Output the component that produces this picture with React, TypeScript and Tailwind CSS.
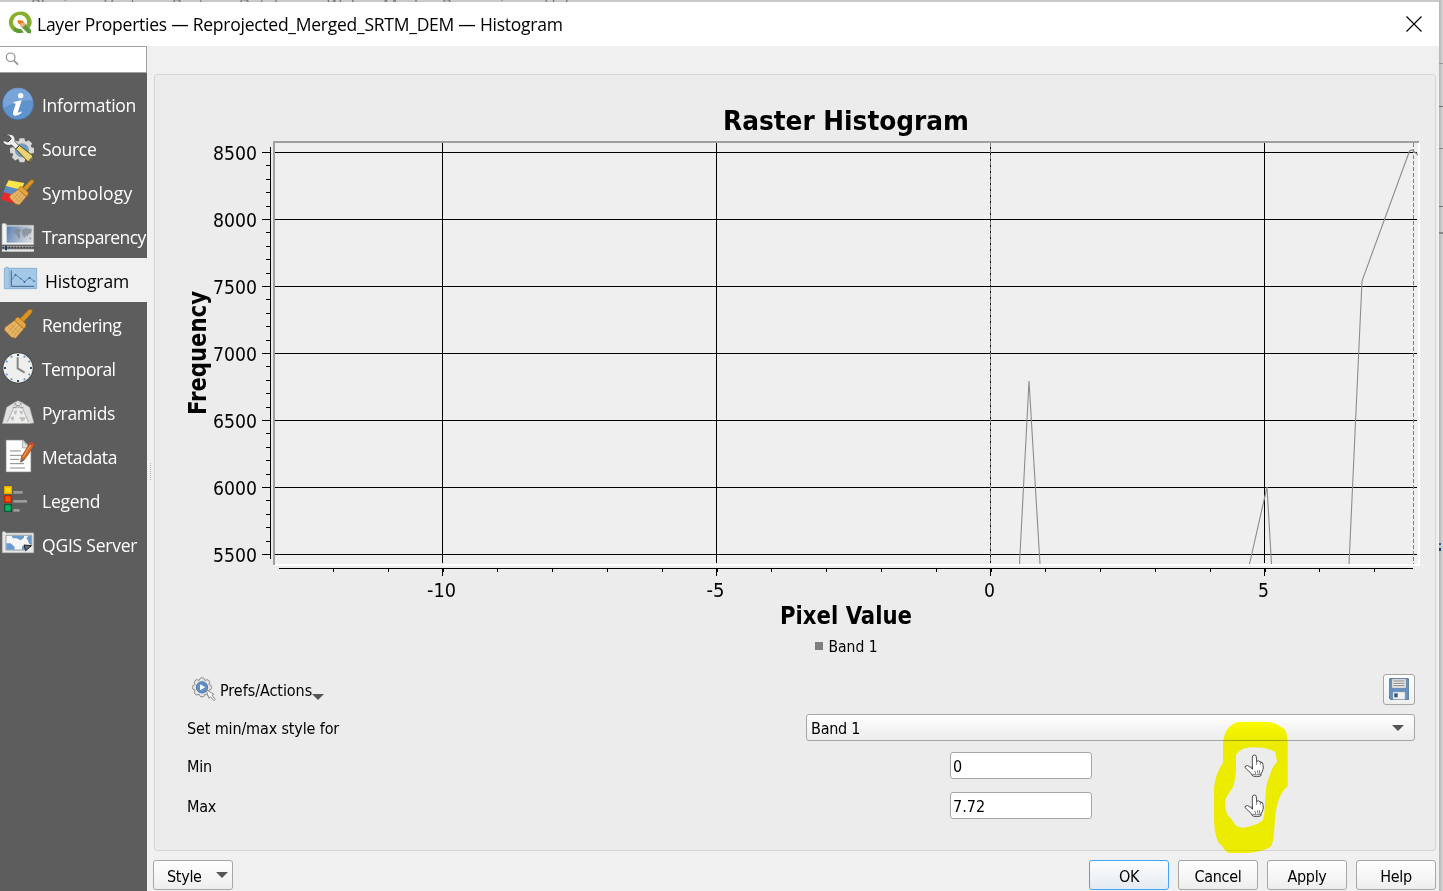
import type { ReactNode } from "react";

const SEGOE = "font-['Open_Sans','Noto_Sans',sans-serif]";
const TAHOMA = "font-['DejaVu_Sans_Condensed','DejaVu_Sans','Noto_Sans',sans-serif]";

/* Every side icon is drawn on a 120 x 132 grid, shown at a third of that size. */
function SideIcon({ children }: { children: ReactNode }) {
  return (
    <svg className="h-11 w-10 shrink-0" viewBox="0 0 120 132">
      {children}
    </svg>
  );
}

function Brush({ dx = 0, dy = 0 }: { dx?: number; dy?: number }) {
  return (
    <g transform={`translate(${dx} ${dy})`}>
      <path d="M56 54 L85 24 Q90 20 95 23 Q99 27 95 33 L68 63Z" fill="#db9527" stroke="#9a6512" strokeWidth="2" />
      <path d="M48 47 L56 46 L78 66 L77 76 L70 80 L44 56Z" fill="#e7a541" stroke="#94601a" strokeWidth="2" />
      <path d="M44 55 L71 81 L47 109 L34 106 L13 84 L15 76Z" fill="#e8b566" stroke="#94601a" strokeWidth="2" />
      <path d="M50 62 L24 91 M57 68 L32 99 M64 75 L41 104 M32 66 L58 92 M24 74 L49 99" stroke="#b98538" strokeWidth="1.5" fill="none" />
    </g>
  );
}

function InformationIcon() {
  return (
    <SideIcon>
      <circle cx="54" cy="66" r="47" fill="#5f93ce" stroke="#3f73b0" strokeWidth="2" />
      <path d="M10 66 A44 44 0 0 1 98 57 Q70 48 10 78Z" fill="#85ade0" opacity=".65" />
      <circle cx="62" cy="41" r="8" fill="#fff" />
      <path d="M41 60 Q55 57 65 55 L54 89 Q53 95 64 88 L65 92 Q54 102 44 101 Q36 99 40 88 L47 66 Q46 63 40 64Z" fill="#fff" />
    </SideIcon>
  );
}

function SourceIcon() {
  const teeth = [0, 45, 90, 135, 180, 225, 270, 315];
  return (
    <SideIcon>
      <g fill="#d6d8d6">
        {teeth.map((a) => (
          <path key={a} d="M55 50 L59 37 H73 L77 50Z" transform={`rotate(${a} 66 73)`} />
        ))}
        <circle cx="66" cy="73" r="29" />
      </g>
      <circle cx="66" cy="73" r="20" fill="#6b9bd0" stroke="#8c8f8c" strokeWidth="2" />
      <path d="M12 29 Q25 20 39 27 Q48 35 45 47 L57 59 L47 69 L35 57 Q17 62 9 49 L10 43 L24 48 L34 38 L27 29Z" fill="#eceeec" stroke="#404442" strokeWidth="2.5" />
      <path d="M58 58 L98 89 L99 101 L92 108 L83 106 L48 70Z" fill="#f0d979" stroke="#54490f" strokeWidth="3" />
      <path d="M62 67 L93 94 M55 72 L87 100" stroke="#d6bc58" strokeWidth="2" />
      <path d="M86 103 L97 92 L99 101 L92 108Z" fill="#6d6b61" />
    </SideIcon>
  );
}

function SymbologyIcon() {
  return (
    <SideIcon>
      <path d="M26 31 L73 39 L60 68 L17 48Z" fill="#fbe34b" />
      <path d="M17 48 L58 58 L45 78 L10 68Z" fill="#5c8cc8" />
      <path d="M10 66 L50 78 L48 101 L5 90Z" fill="#ea2a28" />
      <g transform="translate(17 10) scale(.87)">
        <Brush />
      </g>
    </SideIcon>
  );
}

function TransparencyIcon() {
  return (
    <SideIcon>
      <defs>
        <linearGradient id="fade" x1="0" x2="1" y1=".2" y2=".5">
          <stop offset="0" stopColor="#5f82b4" />
          <stop offset=".6" stopColor="#aab9cc" />
          <stop offset="1" stopColor="#d5d9dc" />
        </linearGradient>
      </defs>
      <path d="M6 30 Q12 25 19 30 V34 H101 V92 H6Z" fill="#f1f2f1" stroke="#a9abaa" strokeWidth="2" />
      <path d="M20 37 H98 V86 H20Z" fill="url(#fade)" />
      <path d="M42 47 L54 43 L64 48 L58 56 L61 66 L57 76 L51 64 L44 56Z M66 48 L78 42 L96 46 L93 58 L86 60 L82 68 L78 62 L73 72 L67 60Z M87 70 L95 72 L91 78Z" fill="#7f8893" opacity=".75" />
      <path d="M6 96 H102 V113 H6Z" fill="#e9e9e8" />
      <path d="M6 97 H102 V106 H6Z" fill="#777876" />
      <path d="M8 101 H102" stroke="#222" strokeWidth="5" strokeDasharray="3 6" />
      <path d="M15 96 H21 V109 H15Z" fill="#173b77" />
    </SideIcon>
  );
}

function HistogramIcon() {
  return (
    <SideIcon>
      <path d="M13 31 Q20 24 28 31 H110 V92 H13Z" fill="#a4c8e6" stroke="#6f9ec9" strokeWidth="2" />
      <path d="M28 31 V92" stroke="#7fabd2" strokeWidth="2" />
      <path d="M34 38 V85 H103" fill="none" stroke="#274f7d" strokeWidth="2.5" />
      <path d="M34 67 L47 51 L74 71 L89 59 L104 71" fill="none" stroke="#3268a4" strokeWidth="2" />
      <path d="M44 48h5v5h-5z M60 60h4v4h-4z M71 69h5v5h-5z M86 57h5v5h-5z M101 68h4v4h-4z" fill="#3268a4" />
    </SideIcon>
  );
}

function RenderingIcon() {
  return (
    <SideIcon>
      <Brush />
    </SideIcon>
  );
}

function TemporalIcon() {
  const hours = [0, 1, 2, 3, 4, 5, 6, 7, 8, 9, 10, 11];
  return (
    <SideIcon>
      <circle cx="54" cy="66" r="47" fill="#484a49" />
      <circle cx="54" cy="66" r="44" fill="#eff0ee" />
      {hours.map((h) => (
        <path key={h} d="M51 24h6v6h-6z" fill={h % 3 === 0 ? "#2a4b78" : "#6b9bd6"} transform={`rotate(${h * 30} 54 66)`} />
      ))}
      <path d="M53 34 V67 L74 80" fill="none" stroke="#858786" strokeWidth="6" />
    </SideIcon>
  );
}

function PyramidsIcon() {
  return (
    <SideIcon>
      <path d="M20 52 L44 37 L54 32 L65 37 L89 52 L102 99 L88 101 H7Z" fill="#dfe0df" stroke="#939593" strokeWidth="1.5" />
      <path d="M45 42 L63 42 L84 98 H23Z" fill="#eeeeec" />
      <path d="M48 38 L22 96 M60 38 L86 96 M43 41 L65 54 M65 41 L42 54 M38 53 H70 M47 47 H61" stroke="#797b79" strokeWidth="2" strokeDasharray="5 2" fill="none" />
      <path d="M41 64 L52 61 L48 74 L43 72Z M58 62 L69 63 L66 74 L61 71Z M31 82 L43 79 L40 92 L34 90Z M57 82 L77 81 L73 90 L66 95 L62 89Z" fill="#bfc0bf" />
    </SideIcon>
  );
}

function MetadataIcon() {
  return (
    <SideIcon>
      <path d="M19 19 H69 L92 43 V113 H19Z" fill="#fff" stroke="#d4d6d4" strokeWidth="2" />
      <path d="M67 20 V42 H90Z" fill="#dcdedc" stroke="#959795" strokeWidth="2" />
      <path d="M30 51 H63 M30 64 H68 M30 76 H58 M30 89 H72 M30 102 H75" stroke="#888a88" strokeWidth="3" />
      <path d="M88 30 L103 34 L74 76 L62 84 L64 69Z" fill="#d96b28" stroke="#893b0f" strokeWidth="2" />
      <path d="M87 30 L91 24 L103 27 L103 34Z" fill="#d74435" />
      <path d="M92 33 L69 70" stroke="#f4a15c" strokeWidth="3" />
      <path d="M62 87 L65 73 L74 77Z" fill="#6b6b67" />
    </SideIcon>
  );
}

function LegendIcon() {
  return (
    <SideIcon>
      <path d="M14 26 H34 V46 H14Z" fill="#ffdd00" stroke="#eea300" strokeWidth="4" />
      <path d="M14 53 H34 V73 H14Z" fill="#ff4f00" stroke="#b22a00" strokeWidth="4" />
      <path d="M14 80 H34 V100 H14Z" fill="#08b860" stroke="#06593a" strokeWidth="4" />
      <path d="M40 43 H68 M40 70 H81 M40 97 H59" stroke="#999" strokeWidth="8" />
    </SideIcon>
  );
}

function ServerIcon() {
  return (
    <SideIcon>
      <path d="M7 30 Q13 26 18 33 H101 V92 H7Z" fill="#e6e8e7" stroke="#b9bbba" strokeWidth="2" />
      <path d="M18 40 H95 V72 L78 84 H18Z" fill="#f5f6f5" stroke="#6d7479" strokeWidth="2" />
      <path d="M35 41 H72 V47 L62 55 L50 49 L38 49Z M19 64 L32 64 L44 75 L43 83 H19Z M86 41 H94 V68 L88 66 L83 54 L79 48Z M66 73 L74 72 L77 83 H66Z" fill="#6a9bd0" />
      <path d="M72 69 L94 71 L77 86Z" fill="#666d70" stroke="#222" strokeWidth="3" />
    </SideIcon>
  );
}

const SECTIONS = [
  { label: "Information", icon: <InformationIcon />, spacing: "tracking-[-0.27px]" },
  { label: "Source", icon: <SourceIcon />, spacing: "tracking-[-0.3px]" },
  { label: "Symbology", icon: <SymbologyIcon />, spacing: "tracking-[0.15px]" },
  { label: "Transparency", icon: <TransparencyIcon />, spacing: "tracking-[-0.6px]" },
  { label: "Histogram", icon: <HistogramIcon />, spacing: "tracking-[-0.1px]" },
  { label: "Rendering", icon: <RenderingIcon />, spacing: "tracking-[-0.5px]" },
  { label: "Temporal", icon: <TemporalIcon />, spacing: "tracking-[-0.6px]" },
  { label: "Pyramids", icon: <PyramidsIcon />, spacing: "tracking-[-0.35px]" },
  { label: "Metadata", icon: <MetadataIcon />, spacing: "tracking-[-0.35px]" },
  { label: "Legend", icon: <LegendIcon />, spacing: "tracking-[-0.25px]" },
  { label: "QGIS Server", icon: <ServerIcon />, spacing: "tracking-[-0.22px]" },
];

function Sidebar() {
  return (
    <aside className="flex w-[147px] shrink-0 flex-col bg-[#5d5d5d]">
      <div className="flex h-[27px] items-center border-t border-r border-b border-[#a0a0a0] bg-white pl-1">
        <svg className="mb-[1px] h-[16px] w-[16px]" viewBox="0 0 48 48" fill="none" stroke="#8f8f8f" strokeWidth="3.5">
          <circle cx="20" cy="19" r="13" />
          <path d="M30 29 L42 41" strokeWidth="5" />
        </svg>
      </div>
      <nav className={`flex flex-col pt-[9px] text-[17.5px] ${SEGOE}`}>
        {SECTIONS.map(({ label, icon, spacing }) => {
          const active = label === "Histogram";
          return (
            <div key={label} className={`flex h-11 items-center overflow-hidden whitespace-nowrap ${active ? "bg-[#f0f0f0] text-black" : "text-white"}`}>
              {icon}
              <span className={`pt-[3px] ${spacing} ${active ? "pl-[5px]" : "pl-[2px]"}`}>{label}</span>
            </div>
          );
        })}
      </nav>
    </aside>
  );
}

function TitleBar() {
  return (
    <header className="flex h-11 shrink-0 items-center bg-white pr-[17px] pl-[8px]">
      <svg className="mb-[2px] h-[24px] w-[24px]" viewBox="0 0 72 72">
        <path d="M35 2 A33 32 0 1 0 47 64 L38 54 A21 21 0 1 1 55 42 L65 52 A33 32 0 0 0 35 2Z" fill="#86b02b" />
        <path d="M17 61 A33 32 0 0 0 47 64 L38 54 Q25 55 20 48Z" fill="#5f9b34" />
        <path d="M38 36 L49 35 L69 56 V67 H59 L38 46Z" fill="#5f9a3a" />
        <path d="M30 27 L44 29 L49 36 L42 42 L38 42 L29 35Z" fill="#ee7913" />
        <path d="M38 36 L49 35 L54 40 L43 50 L38 46Z" fill="#e9b17d" />
      </svg>
      <h1 className={`ml-[5px] text-[17.5px] tracking-[-0.25px] whitespace-nowrap text-black ${SEGOE}`}>Layer Properties — Reprojected_Merged_SRTM_DEM — Histogram</h1>
      <svg className="mr-0 mb-[1px] ml-auto h-[16px] w-[16px]" viewBox="0 0 16 16">
        <path d="M.5 .5 L15.5 15.5 M15.5 .5 L.5 15.5" stroke="#000" strokeWidth="1.2" />
      </svg>
    </header>
  );
}

const Y_TICKS = [8500, 8000, 7500, 7000, 6500, 6000, 5500];
const X_TICKS = [
  { label: "-10", x: 442, w: 29 },
  { label: "-5", x: 716, w: 18 },
  { label: "0", x: 990, w: 11 },
  { label: "5", x: 1264, w: 11 },
];

function HistogramChart() {
  const yMinor: number[] = [];
  for (let y = 152; y < 558; y += 13.4) yMinor.push(Math.round(y));
  const xMinor: number[] = [];
  for (let x = 333; x < 1412; x += 54.8) xMinor.push(Math.round(x));
  return (
    <svg className={`block h-[590px] w-[1280px] ${TAHOMA}`} viewBox="155 75 1280 590">
      <text x="723" y="130" fontSize="26.5" fontWeight="700" textLength="246" lengthAdjust="spacingAndGlyphs">Raster Histogram</text>

      <rect x="274" y="142" width="1145" height="423" fill="#efefef" />
      <g shapeRendering="crispEdges">
        {Y_TICKS.map((v, i) => (
          <rect key={v} x="275" y={152 + i * 67} width="1142" height="1" />
        ))}
        {X_TICKS.map((t) => (
          <rect key={t.label} x={t.x} y="143" width="1" height="420" />
        ))}
        <path d="M990.5 143 V563" stroke="#808080" strokeDasharray="4 2" />
        <path d="M1413.5 143 V564" stroke="#808080" strokeDasharray="4 2" />
      </g>
      <path
        d="M1019.5 564 L1029 381 L1040 564 M1249.5 564 L1267 487 L1271.5 564 M1349 564 L1362 281 L1409.5 151 L1412 150 L1418 155"
        fill="none"
        stroke="#8c8c8c"
        strokeWidth="1.1"
      />
      <g shapeRendering="crispEdges">
        <rect x="1418" y="142" width="2" height="424" fill="#fff" />
        <rect x="274" y="564" width="1146" height="2" fill="#fff" />
        <rect x="273" y="141" width="1146" height="2" fill="#a0a0a0" />
        <rect x="273" y="141" width="2" height="424" fill="#a0a0a0" />

        <rect x="270" y="147" width="1" height="412" />
        {yMinor.map((y) => (
          <rect key={y} x="266" y={y} width="4" height="1" />
        ))}
        {Y_TICKS.map((v, i) => (
          <rect key={v} x="262" y={152 + i * 67} width="8" height="1" />
        ))}
        <rect x="279" y="568" width="1134" height="1" />
        {xMinor.map((x) => (
          <rect key={x} x={x} y="568" width="1" height="4" />
        ))}
        {X_TICKS.map((t) => (
          <rect key={t.label} x={t.x} y="568" width="1" height="8" />
        ))}
      </g>

      <g fontSize="20">
        {Y_TICKS.map((v, i) => (
          <text key={v} x="213" y={160 + i * 67} textLength="44" lengthAdjust="spacingAndGlyphs">{v}</text>
        ))}
        {X_TICKS.map((t) => (
          <text key={t.label} x={t.x - 0.5 - t.w / 2} y="597" textLength={t.w} lengthAdjust="spacingAndGlyphs">{t.label}</text>
        ))}
      </g>
      <text x="780" y="624" fontSize="24" fontWeight="700" textLength="132" lengthAdjust="spacingAndGlyphs">Pixel Value</text>
      <text transform="translate(206 415) rotate(-90)" fontSize="24" fontWeight="700" textLength="124" lengthAdjust="spacingAndGlyphs">Frequency</text>
      <rect x="815" y="642" width="8" height="8" fill="#808080" />
      <text x="828.5" y="652" fontSize="16" textLength="49" lengthAdjust="spacingAndGlyphs">Band 1</text>
    </svg>
  );
}

function Arrow({ className = "" }: { className?: string }) {
  return (
    <svg className={`h-[6px] w-[12px] shrink-0 ${className}`} viewBox="0 0 12 6">
      <path d="M0 0 H12 L6 6Z" fill="#555" />
    </svg>
  );
}

function GearIcon() {
  const bumps = [0, 45, 90, 135, 180, 225, 270, 315];
  return (
    <svg className="mb-[2px] h-[24px] w-[24px] shrink-0" viewBox="0 0 72 72">
      <g fill="#e6e6e6" stroke="#7d7d7d" strokeWidth="2.5">
        {bumps.map((a) => (
          <circle key={a} cx="30" cy="10" r="8" transform={`rotate(${a} 30 31)`} />
        ))}
      </g>
      <circle cx="30" cy="31" r="22" fill="#e6e6e6" />
      <circle cx="30" cy="31" r="17" fill="#5d8fca" stroke="#426f9f" strokeWidth="2.5" />
      <path d="M24 22 L40 31 L24 40Z" fill="#fff" />
      <path d="M42 38 L66 52 L60 55 L70 67 L66 71 L55 59 L51 64Z" fill="#fff" stroke="#777" strokeWidth="2.5" />
    </svg>
  );
}

function SaveIcon() {
  return (
    <svg className="mb-[2px] h-[22px] w-[20px]" viewBox="0 0 60 66">
      <path d="M1 4 Q1 1 4 1 H56 Q59 1 59 4 V65 H5 L1 61Z" fill="#6391c3" stroke="#3d618c" strokeWidth="2" />
      <path d="M9 3 H51 V30 H9Z" fill="#f1f2f1" stroke="#8b8d8b" strokeWidth="1.5" />
      <path d="M13 9 H47 M13 16 H47 M13 23 H47" stroke="#666" strokeWidth="2.5" />
      <path d="M12 42 H48 V64 H12Z" fill="#f1f2f1" stroke="#aaa" strokeWidth="1.5" />
      <path d="M16 46 H26 V58 H16Z" fill="#32567f" />
    </svg>
  );
}

function HandIcon() {
  return (
    <svg className="h-[24px] w-[21px]" viewBox="190 281 63 72" fill="#fff" stroke="#333" strokeWidth="2.6" strokeLinejoin="round" strokeLinecap="round">
      <path d="M215 318 L215 290 Q216 284 221 284 Q227 284 227 290 L228 303 Q235 299 239 305 Q247 304 247 313 Q250 323 245 333 L241 341 L240 347 Q228 351 216 347 Q212 338 205 333 Q196 326 193 321 Q194 315 201 316 Q208 319 215 325Z" />
      <path d="M215 318 V326 M228 303 V312 M239 305 V312 M223 333 L225 340 M230 331 L232 339 M236 330 L237 338 M216 342 Q228 346 240 342" fill="none" strokeWidth="2" />
    </svg>
  );
}

function HighlighterMark() {
  return (
    <svg className="pointer-events-none absolute top-[721px] left-[1213px] h-[133px] w-[76px] mix-blend-multiply" viewBox="99 183 228 399">
      <path
        fillRule="evenodd"
        fill="#ffff00"
        d="M172 186 L240 185 L272 187 Q300 194 316 211 Q323 225 323 255 V378 Q306 395 300 410 Q288 440 286 465 L281 530 Q278 550 272 560 Q250 574 205 579 H145 Q132 570 128 560 Q114 550 110 535 Q102 510 102 480 V385 Q106 340 129 308 V255 Q130 225 142 208 Q155 192 172 186Z M190 266 Q215 259 245 263 Q270 265 286 277 L291 305 Q274 325 270 345 Q258 370 257 400 L254 450 Q252 475 246 483 Q220 500 190 503 Q170 504 163 490 Q152 472 142 464 Q132 440 137 417 Q144 400 160 380 Q167 355 168 330 V285 Q178 270 190 266Z"
      />
    </svg>
  );
}

function ValueRow({ label, value }: { label: string; value: string }) {
  return (
    <div className="flex h-10 items-center">
      <span className="w-[763px] pt-[2px] tracking-[-0.2px]">{label}</span>
      <div className="mb-[1px] flex h-[27px] w-[142px] items-center rounded-[3px] border border-[#a6a6a6] bg-white pt-[2px] pl-[2px]">{value}</div>
      <span className="ml-[152px]">
        <HandIcon />
      </span>
    </div>
  );
}

function HistogramPanel() {
  return (
    <section className="mt-[28px] ml-[7px] flex h-[777px] w-[1282px] flex-col rounded-[3px] border border-[#d5d5d5] bg-[#ececec]">
      <HistogramChart />
      <div className={`flex flex-col pr-5 pl-8 text-[16px] leading-5 text-black ${TAHOMA}`}>
        <div className="mt-[9px] flex h-[31px] items-center">
          <span className="ml-[5px] flex items-center">
            <GearIcon />
            <span className="ml-[4px] pt-[2px] tracking-[-0.05px]">Prefs/Actions</span>
            <Arrow className="mt-[15px]" />
          </span>
          <button className="ml-auto flex h-[31px] w-8 items-center justify-center rounded-[3px] border border-[#a6a6a6] bg-gradient-to-b from-white to-[#efefef]">
            <SaveIcon />
          </button>
        </div>
        <div className="mt-[9px] flex h-[27px] items-center">
          <span className="w-[619px] pt-[2px] tracking-[-0.14px]">Set min/max style for</span>
          <div className="flex h-[27px] w-[609px] items-center justify-between rounded-[3px] border border-[#a6a6a6] bg-gradient-to-b from-white to-[#ececec] pr-[10px] pl-1">
            <span className="pt-[2px] tracking-[-0.25px]">Band 1</span>
            <Arrow />
          </div>
        </div>
        <div className="mt-[5px] flex flex-col">
          <ValueRow label="Min" value="0" />
          <ValueRow label="Max" value="7.72" />
        </div>
      </div>
    </section>
  );
}

function DialogButton({ children, primary = false }: { children: ReactNode; primary?: boolean }) {
  return (
    <button className={`h-[30px] w-20 rounded-[3px] border bg-gradient-to-b pt-[3px] leading-6 ${primary ? "border-[#45a5f5] from-[#fdfeff] to-[#e3eaf0]" : "border-[#a6a6a6] from-white to-[#eeeeee]"}`}>
      {children}
    </button>
  );
}

function DialogFooter() {
  return (
    <footer className={`mt-[9px] flex gap-[9px] pr-[3px] pl-[6px] text-[16px] tracking-[-0.3px] text-black ${TAHOMA}`}>
      <button className="mr-auto flex h-[30px] w-20 items-center justify-between rounded-[3px] border border-[#a6a6a6] bg-gradient-to-b from-white to-[#eeeeee] pr-1 pl-[13px]">
        <span className="pt-[3px]">Style</span>
        <Arrow />
      </button>
      <DialogButton primary>OK</DialogButton>
      <DialogButton>Cancel</DialogButton>
      <DialogButton>Apply</DialogButton>
      <DialogButton>Help</DialogButton>
    </footer>
  );
}

const MENU = [
  { label: "Plugins", width: "w-[73px]" },
  { label: "Vector", width: "w-[68px]" },
  { label: "Raster", width: "w-[67px]" },
  { label: "Database", width: "w-[88px]" },
  { label: "Web", width: "w-[56px]" },
  { label: "Mesh", width: "w-[59px]" },
  { label: "Processing", width: "w-[102px]" },
  { label: "Help", width: "w-[60px]" },
];

export default function App() {
  return (
    <div className="relative flex h-[891px] w-[1443px] overflow-hidden bg-[#c9c9c9]">
      <div className="flex w-[1439px] shrink-0 flex-col">
        <div className={`flex h-[2px] shrink-0 overflow-hidden pl-[31px] text-[16px] leading-[11px] text-[#777] ${SEGOE}`}>
          {MENU.map((m) => (
            <span key={m.label} className={`shrink-0 ${m.width}`}>{m.label}</span>
          ))}
        </div>
        <TitleBar />
        <div className="flex h-[845px]">
          <Sidebar />
          <main className="flex w-[1292px] flex-col bg-[#f0f0f0]">
            <HistogramPanel />
            <DialogFooter />
          </main>
        </div>
      </div>
      <div className="flex w-1 flex-col bg-gradient-to-r from-[#b5b5b5] to-[#d6d6d6] pt-[20px]">
        <i className="h-[44px] border-b border-[#999]" />
        <i className="h-[43px] border-b border-[#777]" />
        <i className="h-[42px] border-b border-[#888]" />
        <i className="h-[58px] border-b border-[#777]" />
        <i className="h-[27px] border-b-2 border-[#888]" />
        <i className="mt-[309px] h-[2px] w-[2px] bg-[#2f5f8f]" />
        <i className="mt-[3px] h-[3px] w-[2px] bg-[#143f70]" />
      </div>
      <div className="absolute top-[463px] left-[150px] h-[17px] w-[2px] border-l border-dotted border-[#b5b5b5]" />
      <HighlighterMark />
    </div>
  );
}
